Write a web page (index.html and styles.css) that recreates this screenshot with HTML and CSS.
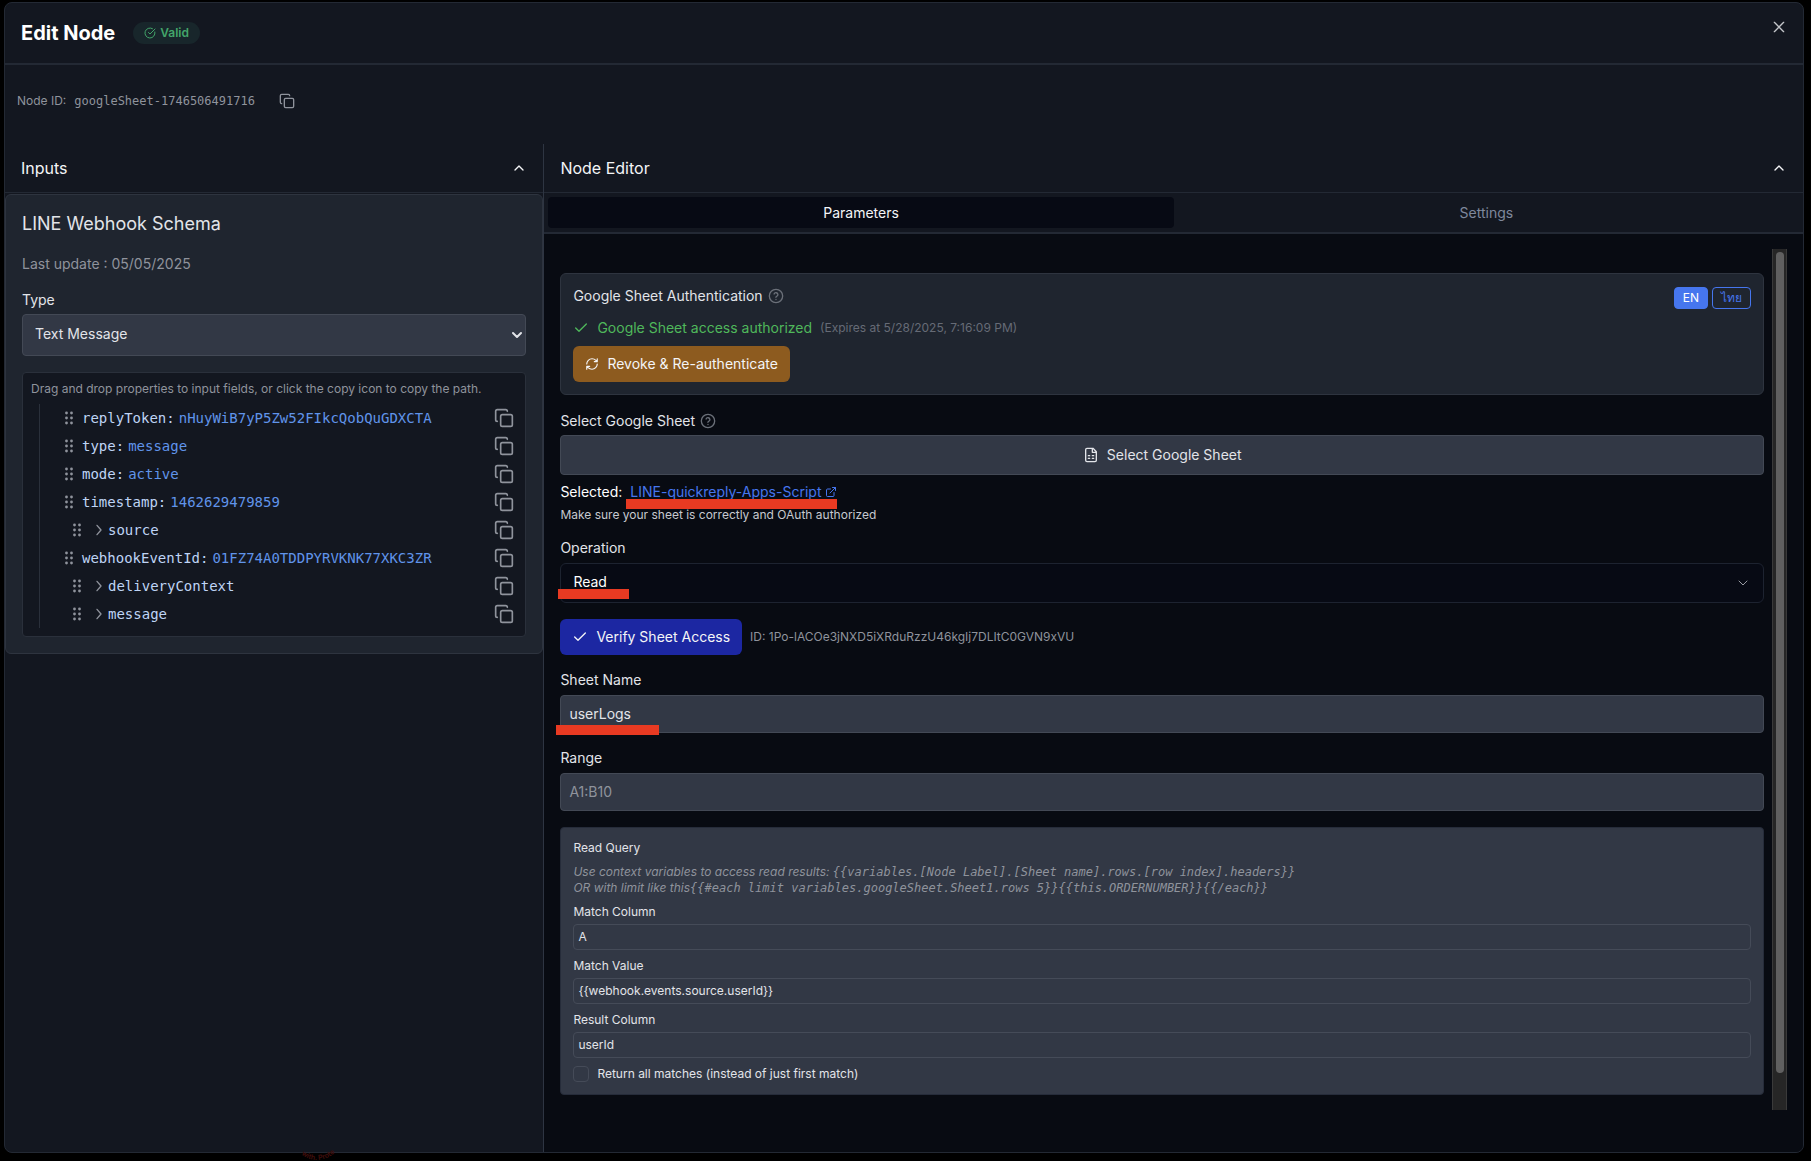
FILE: index.html
```html
<!DOCTYPE html>
<html lang="en">
<head>
<meta charset="utf-8">
<meta name="viewport" content="width=device-width, initial-scale=1">
<title>Edit Node</title>
<link rel="stylesheet" href="styles.css">
</head>
<body>
<svg class="defs" width="0" height="0" aria-hidden="true">
  <symbol id="copy" viewBox="0 0 24 24"><rect x="8" y="8" width="14" height="14" rx="2"/><path d="M4 16c-1.1 0-2-.9-2-2V4c0-1.1.9-2 2-2h10c1.1 0 2 .9 2 2"/></symbol>
  <symbol id="grip" viewBox="0 0 8 14"><circle cx="1.5" cy="2" r="1.4"/><circle cx="6.5" cy="2" r="1.4"/><circle cx="1.5" cy="7" r="1.4"/><circle cx="6.5" cy="7" r="1.4"/><circle cx="1.5" cy="12" r="1.4"/><circle cx="6.5" cy="12" r="1.4"/></symbol>
  <symbol id="right" viewBox="0 0 24 24"><path d="m9 19 6-7-6-7"/></symbol>
  <symbol id="up" viewBox="0 0 24 24"><path d="m6 15 6-6 6 6"/></symbol>
  <symbol id="check" viewBox="0 0 24 24"><path d="M20 6 9 17l-5-5"/></symbol>
  <symbol id="help" viewBox="0 0 24 24"><circle cx="12" cy="12" r="10"/><path d="M9.1 9a3 3 0 0 1 5.8 1c0 2-3 2.6-3 4M12 17.2v.1"/></symbol>
</svg>
<svg class="stamp" width="60" height="60" viewBox="0 0 60 60" aria-hidden="true">
  <path id="arc" d="M5 16a25 25 0 0 0 50 0" fill="none"/>
  <text><textPath href="#arc" startOffset="22">with. Prote</textPath></text>
</svg>
<main class="modal">
  <header class="modal-head">
    <h1>Edit Node</h1>
    <span class="badge"><svg class="icon i12" viewBox="0 0 24 24"><path d="M21.8 10A10 10 0 1 1 17 3.3"/><path d="m9 11 3 3L22 4"/></svg>Valid</span>
    <button class="bare close" type="button" aria-label="Close"><svg class="icon i16" viewBox="0 0 24 24"><path d="M5 5l14 14M19 5 5 19"/></svg></button>
  </header>
  <div class="node-id">
    <span>Node ID:</span><code>googleSheet-1746506491716</code>
    <button class="bare" type="button" aria-label="Copy node ID"><svg class="icon i16"><use href="#copy"/></svg></button>
  </div>
  <div class="panels">
    <section class="inputs">
      <div class="panel-head"><h2>Inputs</h2><button class="bare" type="button" aria-label="Collapse inputs"><svg class="icon i16"><use href="#up"/></svg></button></div>
      <div class="schema">
        <h3>LINE Webhook Schema</h3>
        <p class="updated">Last update : 05/05/2025</p>
        <label class="type-label" for="type">Type</label>
        <div class="select-wrap">
          <select id="type"><option>Text Message</option></select>
          <svg class="icon select-arrow" viewBox="0 0 10 8"><path d="m1 2 4 4 4-4"/></svg>
        </div>
        <div class="tree">
          <p>Drag and drop properties to input fields, or click the copy icon to copy the path.</p>
          <ul>
            <li><svg class="grip"><use href="#grip"/></svg><span class="key">replyToken:</span><span class="val">nHuyWiB7yP5Zw52FIkcQobQuGDXCTA</span><button class="bare" type="button" aria-label="Copy replyToken"><svg class="icon i20"><use href="#copy"/></svg></button></li>
            <li><svg class="grip"><use href="#grip"/></svg><span class="key">type:</span><span class="val">message</span><button class="bare" type="button" aria-label="Copy type"><svg class="icon i20"><use href="#copy"/></svg></button></li>
            <li><svg class="grip"><use href="#grip"/></svg><span class="key">mode:</span><span class="val">active</span><button class="bare" type="button" aria-label="Copy mode"><svg class="icon i20"><use href="#copy"/></svg></button></li>
            <li><svg class="grip"><use href="#grip"/></svg><span class="key">timestamp:</span><span class="val">1462629479859</span><button class="bare" type="button" aria-label="Copy timestamp"><svg class="icon i20"><use href="#copy"/></svg></button></li>
            <li class="branch"><svg class="grip"><use href="#grip"/></svg><svg class="icon i16"><use href="#right"/></svg><span class="key">source</span><button class="bare" type="button" aria-label="Copy source"><svg class="icon i20"><use href="#copy"/></svg></button></li>
            <li><svg class="grip"><use href="#grip"/></svg><span class="key">webhookEventId:</span><span class="val">01FZ74A0TDDPYRVKNK77XKC3ZR</span><button class="bare" type="button" aria-label="Copy webhookEventId"><svg class="icon i20"><use href="#copy"/></svg></button></li>
            <li class="branch"><svg class="grip"><use href="#grip"/></svg><svg class="icon i16"><use href="#right"/></svg><span class="key">deliveryContext</span><button class="bare" type="button" aria-label="Copy deliveryContext"><svg class="icon i20"><use href="#copy"/></svg></button></li>
            <li class="branch"><svg class="grip"><use href="#grip"/></svg><svg class="icon i16"><use href="#right"/></svg><span class="key">message</span><button class="bare" type="button" aria-label="Copy message"><svg class="icon i20"><use href="#copy"/></svg></button></li>
          </ul>
        </div>
      </div>
    </section>
    <section class="editor">
      <div class="panel-head"><h2>Node Editor</h2><button class="bare" type="button" aria-label="Collapse editor"><svg class="icon i16"><use href="#up"/></svg></button></div>
      <div class="tabs" role="tablist">
        <button type="button" role="tab" aria-selected="true">Parameters</button>
        <button type="button" role="tab" aria-selected="false">Settings</button>
      </div>
      <div class="scroll-area">
        <div class="scroll">
          <div class="auth">
            <div class="auth-main">
              <div class="label-row">Google Sheet Authentication<svg class="icon i16 dim"><use href="#help"/></svg></div>
              <div class="status"><svg class="icon i16"><use href="#check"/></svg><span class="ok">Google Sheet access authorized</span><small>(Expires at 5/28/2025, 7:16:09 PM)</small></div>
              <button class="btn revoke" type="button"><svg class="icon i14" viewBox="0 0 24 24"><path d="M3 12a9 9 0 0 1 9-9 9.750 9.750 0 0 1 6.740 2.740L21 8M21 3v5h-5M21 12a9 9 0 0 1-9 9 9.750 9.750 0 0 1-6.740-2.740L3 16M8 16H3v5"/></svg>Revoke &amp; Re-authenticate</button>
            </div>
            <div class="langs"><button class="on" type="button">EN</button><button type="button" lang="th">ไทย</button></div>
          </div>
          <div class="label-row sheet-label">Select Google Sheet<svg class="icon i16 dim"><use href="#help"/></svg></div>
          <button class="pick" type="button"><svg class="icon i16" viewBox="0 0 24 24"><path d="M15 2H6a2 2 0 0 0-2 2v16a2 2 0 0 0 2 2h12a2 2 0 0 0 2-2V7ZM14 2v6h6M8 13h2M14 13h2M8 17h2M14 17h2"/></svg>Select Google Sheet</button>
          <p class="selected"><span>Selected:</span><a class="marked" href="#">LINE-quickreply-Apps-Script<svg class="icon i12" viewBox="0 0 24 24"><path d="M15 3h6v6M10 14 21 3M18 13v6a2 2 0 0 1-2 2H5a2 2 0 0 1-2-2V8c0-1.100.9-2 2-2h6"/></svg></a></p>
          <p class="note">Make sure your sheet is correctly and OAuth authorized</p>
          <label class="label" for="operation">Operation</label>
          <div class="select-wrap operation marked">
            <select id="operation"><option>Read</option></select>
            <svg class="icon select-arrow" viewBox="0 0 10 8"><path d="m1 2 4 4 4-4"/></svg>
          </div>
          <div class="verify-row"><button class="btn verify" type="button"><svg class="icon i16"><use href="#check"/></svg>Verify Sheet Access</button><span>ID: 1Po-lACOe3jNXD5iXRduRzzU46kgIj7DLItC0GVN9xVU</span></div>
          <label class="label" for="sheet">Sheet Name</label>
          <div class="field marked"><input id="sheet" type="text" value="userLogs"></div>
          <label class="label" for="range">Range</label>
          <div class="field"><input id="range" type="text" placeholder="A1:B10"></div>
          <div class="query">
            <h4>Read Query</h4>
            <p>Use context variables to access read results: <code>{{variables.[Node Label].[Sheet name].rows.[row index].headers}}</code><br>OR with limit like this<code>{{#each limit variables.googleSheet.Sheet1.rows 5}}{{this.ORDERNUMBER}}{{/each}}</code></p>
            <label for="mcol">Match Column</label>
            <input id="mcol" type="text" value="A">
            <label for="mval">Match Value</label>
            <input id="mval" type="text" value="{{webhook.events.source.userId}}">
            <label for="rcol">Result Column</label>
            <input id="rcol" type="text" value="userId">
            <div class="all"><input id="all" type="checkbox"><label for="all">Return all matches (instead of just first match)</label></div>
          </div>
        </div>
        <div class="rail" aria-hidden="true"><div class="thumb"></div></div>
      </div>
    </section>
  </div>
</main>
</body>
</html>
```

FILE: styles.css
```css
:root {
  --panel: #131720;
  --line: #232934;
  --field: #323845;
  --sans: Inter, "Noto Sans", sans-serif;
  --mono: "DejaVu Sans Mono", monospace;
}
* { box-sizing: border-box; }
body {
  margin: 0;
  height: 100vh;
  padding: 2px 7px 8px 4px;
  background: #000;
  color: #e2e4e9;
  font: 14px/20px var(--sans);
}
h1, h2, h3, h4, p, ul { margin: 0; padding: 0; font-weight: 400; }
button, input, select { font: inherit; color: inherit; }
button { cursor: pointer; }
code { font-family: var(--mono); font-size: 12px; }
.defs { position: absolute; }
.stamp { position: absolute; left: 287px; bottom: -18px; }
.stamp text { font: bold 7px var(--sans); fill: #3d0d0b; }
.icon { flex: none; fill: none; stroke: currentColor; stroke-width: 2; stroke-linecap: round; stroke-linejoin: round; }
.i12 { width: 12px; height: 12px; }
.i14 { width: 14px; height: 14px; }
.i16 { width: 16px; height: 16px; }
.i20 { width: 20px; height: 20px; }
.bare { display: flex; padding: 0; border: 0; background: none; }

.modal {
  height: 100%;
  display: flex;
  flex-direction: column;
  background: var(--panel);
  border: 1px solid var(--line);
  border-radius: 8px;
  overflow: hidden;
}
.modal-head {
  display: flex;
  align-items: center;
  gap: 18px;
  height: 62px;
  padding: 0 16px;
  border-bottom: 2px solid var(--line);
}
h1 { color: #fff; font-size: 20px; line-height: 28px; font-weight: 700; }
.badge {
  display: flex;
  align-items: center;
  gap: 4px;
  height: 22px;
  padding: 0 11px;
  border-radius: 11px;
  background: #18262b;
  color: #43a56a;
  font-size: 12px;
  font-weight: 600;
}
.close { margin: 0 0 12px auto; color: #c3c5c9; }
.node-id {
  display: flex;
  align-items: center;
  gap: 8px;
  height: 79px;
  padding: 0 12px 8px;
  color: #8f939c;
  font-size: 12px;
}
.node-id .bare { margin-left: 16px; }
.panels { flex: 1; min-height: 0; display: grid; grid-template-columns: 30% 1fr; }
.panel-head {
  display: flex;
  align-items: center;
  justify-content: space-between;
  height: 49px;
  padding: 0 16px;
  border-bottom: 1px solid var(--line);
  color: #f4f5f7;
}
h2 { font-size: 16px; line-height: 24px; }

.inputs { border-right: 1px solid #2e3542; }
.schema {
  margin-top: 1px;
  padding: 15px 16px 16px;
  background: #1f252f;
  border: 1px solid #2e343f;
  border-radius: 6px;
}
h3 { font-size: 18px; line-height: 28px; }
.updated { margin-top: 16px; color: #8f939c; }
.type-label { display: block; margin: 16px 0 4px; }
.select-wrap { position: relative; }
select {
  display: block;
  width: 100%;
  height: 42px;
  padding: 0 12px 2px;
  appearance: none;
  background: var(--field);
  border: 1px solid #434955;
  border-radius: 4px;
}
.select-arrow { position: absolute; right: 4px; top: 17px; width: 10px; height: 8px; }
.tree {
  margin-top: 16px;
  padding: 8px;
  background: var(--panel);
  border: 1px solid #2a303b;
  border-radius: 4px;
}
.tree p { color: #8f939c; font-size: 12px; line-height: 16px; white-space: nowrap; }
.tree ul { margin: 7px 0 0 8px; border-left: 1px solid #2a303b; list-style: none; }
.tree li {
  display: flex;
  align-items: center;
  height: 28px;
  padding: 0 3px 0 25px;
  color: #8f939c;
  font: 14px/20px var(--mono);
}
.tree .branch { padding-left: 33px; }
.tree li > .icon { margin: 0 -7px 0 1px; }
.grip { flex: none; width: 8px; height: 14px; margin-right: 9px; fill: currentColor; }
.key { color: #bfd4f5; }
.val { margin-left: 4px; color: #6094ea; }
.tree li .bare { margin-left: auto; }
.branch .key { margin-left: 8px; }

.editor { display: flex; flex-direction: column; min-height: 0; min-width: 0; background: #080b12; }
.editor .panel-head { flex: none; background: var(--panel); }
.tabs {
  display: grid;
  grid-template-columns: 1fr 1fr;
  height: 41px;
  padding: 4px;
  background: var(--panel);
  border-bottom: 2px solid var(--line);
  flex: none;
}
.tabs button { border: 0; border-radius: 4px; background: none; color: #7f889c; padding: 0; }
.tabs [aria-selected="true"] { background: #070a14; color: #f4f5f7; }
.scroll-area {
  flex: 1;
  min-height: 0;
  display: flex;
  margin: 15px 16px 42px 0;
}
.scroll {
  flex: 1;
  min-width: 0;
  padding: 24px 8px 54px 16px;
  overflow-y: auto;
  scrollbar-width: none;
}
.rail {
  flex: none;
  width: 15px;
  padding: 3px 2px 3px 3px;
  background: #262626;
  border: 1px solid #3a3a3a;
  border-width: 0 1px;
}
.thumb { height: 96%; border-radius: 4px; background: #606060; }

.auth {
  display: flex;
  justify-content: space-between;
  align-items: flex-start;
  padding: 12px;
  background: #1f252f;
  border: 1px solid #2e343f;
  border-radius: 6px;
}
.label-row { display: flex; align-items: center; gap: 5px; }
.dim { color: #6b7079; }
.status { display: flex; align-items: center; gap: 8px; margin: 12px 0 8px; color: #4fb85b; }
.status small { color: #666b76; font-size: 12px; }
.btn {
  display: flex;
  align-items: center;
  gap: 8px;
  height: 36px;
  padding: 0 12px;
  border: 0;
  border-radius: 6px;
  color: #f4f5f7;
}
.revoke { background: #8d5b1f; }
.verify { background: #1c27a2; }
.langs { display: flex; gap: 4px; margin-top: 1px; }
.langs button {
  height: 22px;
  padding: 0 8px;
  border: 1px solid #4676ee;
  border-radius: 4px;
  background: none;
  color: #4676ee;
  font-size: 12px;
  line-height: 16px;
}
.langs .on { background: #4676ee; color: #fff; }
.sheet-label { margin: 16px 0 4px; }
.pick {
  display: flex;
  align-items: center;
  justify-content: center;
  gap: 8px;
  width: 100%;
  height: 40px;
  background: var(--field);
  border: 1px solid #434955;
  border-radius: 4px;
}
.selected { display: flex; gap: 8px; margin-top: 7px; color: #fff; }
.selected a { display: flex; align-items: center; gap: 4px; color: #4676ee; text-decoration: none; }
.note { margin-top: 5px; color: #c6c9cf; font-size: 12px; line-height: 16px; }
.marked { position: relative; }
.marked::after { content: ""; position: absolute; height: 10px; background: #e83a22; }
a.marked::after { left: -4px; right: 0; top: 17px; }
.operation::after { left: -2px; bottom: 4px; width: 71px; }
.field.marked::after { left: -4px; bottom: -2px; width: 103px; }
.label { display: block; margin: 15px 0 5px; }
.operation select { height: 40px; background: #070a14; border-color: #1d2330; border-radius: 6px; color: #fff; }
.operation .select-arrow { right: 16px; top: 16px; color: #9a9da4; stroke-width: 1; }
.verify-row { display: flex; align-items: center; gap: 8px; margin-top: 16px; color: #8f939c; font-size: 12px; }
.verify { font-size: 14px; }
.field input {
  display: block;
  width: 100%;
  height: 38px;
  padding: 0 8px 2px;
  background: var(--field);
  border: 1px solid #434955;
  border-radius: 4px;
}
.field input::placeholder { color: #8f939c; }
.query {
  margin-top: 16px;
  padding: 12px;
  background: var(--field);
  border: 1px solid #262c3a;
  border-radius: 4px;
  font-size: 12px;
  line-height: 16px;
}
h4 { font-size: 12px; line-height: 16px; }
.query p { margin: 8px 0; color: #8f939c; font-style: italic; }
.query > label { display: block; margin: 8px 0 4px; }
.query > input {
  display: block;
  width: 100%;
  height: 26px;
  padding: 0 4px 2px;
  background: transparent;
  border: 1px solid #454b58;
  border-radius: 4px;
}
.all { display: flex; align-items: center; gap: 8px; margin-top: 8px; }
.all input { appearance: none; width: 16px; height: 16px; margin: 0; border: 1px solid #454b58; border-radius: 4px; }
```
